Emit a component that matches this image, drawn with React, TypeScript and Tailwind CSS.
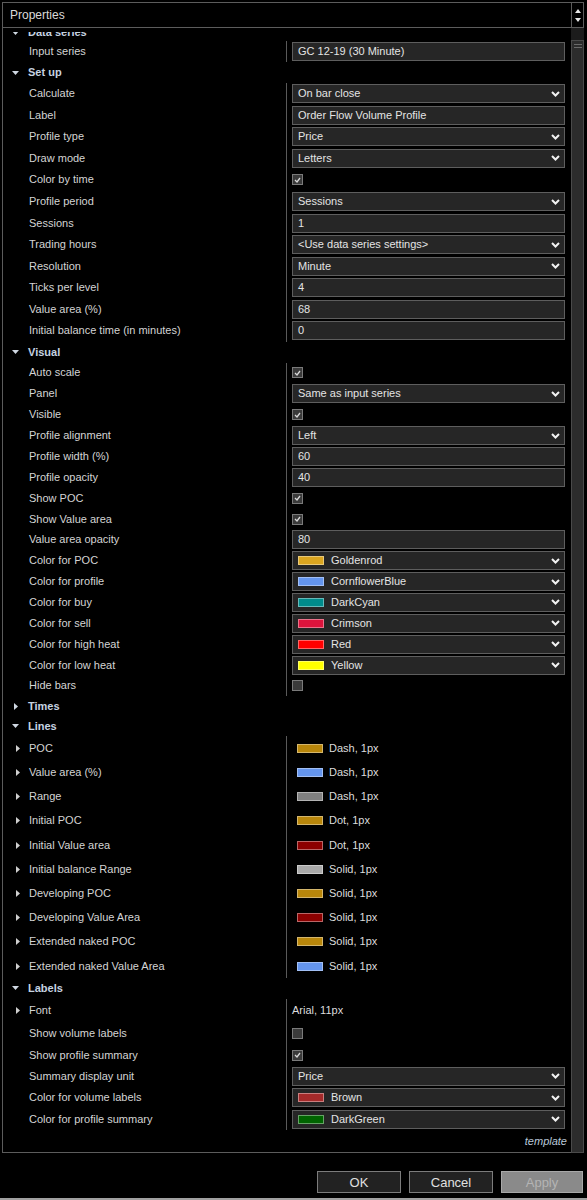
import React from 'react';

type Val =
  | { k: 'input'; v: string }
  | { k: 'dd'; v: string; sw?: string }
  | { k: 'cb'; on: boolean }
  | { k: 'line'; v: string; sw: string }
  | { k: 'text'; v: string };

type Item = { label: string; val: Val; sub?: boolean };

const Chevron = () => (
  <svg width="9" height="6" viewBox="0 0 9 6" className="shrink-0">
    <polyline points="1,1 4.5,4.5 8,1" fill="none" stroke="#f2f2f2" strokeWidth="2" />
  </svg>
);

const Swatch = ({ color }: { color: string }) => (
  <span
    className="inline-block w-[26px] h-[9px] border border-white/40 shrink-0"
    style={{ backgroundColor: color }}
  />
);

const Check = ({ on }: { on: boolean }) => (
  <span className="w-[11px] h-[11px] border border-[#7a7a7a] bg-[#3a3a3a] flex items-center justify-center">
    {on && (
      <svg width="7" height="6" viewBox="0 0 7 6">
        <polyline points="1,3 3,5 6,1" fill="none" stroke="#d8d8d8" strokeWidth="1.3" />
      </svg>
    )}
  </span>
);

const Value = ({ val }: { val: Val }) => {
  if (val.k === 'cb') return <Check on={val.on} />;
  if (val.k === 'text') return <span className="text-[#dcdcdc]">{val.v}</span>;
  if (val.k === 'line')
    return (
      <span className="flex items-center gap-[6px] pl-[5px] text-[#dcdcdc]">
        <Swatch color={val.sw} />
        {val.v}
      </span>
    );
  return (
    <div className="w-[273px] h-[19px] border border-[#5e5e5e] bg-[#262626] flex items-center pl-[5px] pr-[4px] text-[#e4e4e4]">
      {val.k === 'dd' && val.sw && (
        <span className="mr-[7px] flex">
          <Swatch color={val.sw} />
        </span>
      )}
      <span className="flex-1 whitespace-nowrap">{val.v}</span>
      {val.k === 'dd' && <Chevron />}
    </div>
  );
};

const Row = ({ item, h }: { item: Item; h: string }) => (
  <div className={`flex ${h}`}>
    <div className="w-[284px] shrink-0 flex items-center border-r border-[#5a5a5a] pl-[13px] text-[#d4d4d4]">
      <span className="w-[13px] flex items-center">
        {item.sub && (
          <svg width="4" height="7" viewBox="0 0 4 7">
            <polygon points="0,0 4,3.5 0,7" fill="#cfcfcf" />
          </svg>
        )}
      </span>
      {item.label}
    </div>
    <div className="flex-1 flex items-center pl-[5px]">
      <Value val={item.val} />
    </div>
  </div>
);

const Category = ({ label, open, h }: { label: string; open: boolean; h: string }) => (
  <div className={`flex items-center pl-[9px] ${h}`}>
    <span className="w-[16px] flex items-center">
      {open ? (
        <svg width="7" height="4" viewBox="0 0 7 4">
          <polygon points="0,0 7,0 3.5,4" fill="#cfd8e2" />
        </svg>
      ) : (
        <svg width="4" height="7" viewBox="0 0 4 7" className="ml-[2px]">
          <polygon points="0,0 4,3.5 0,7" fill="#cfd8e2" />
        </svg>
      )}
    </span>
    <span className="font-bold text-[#c6d3e1]">{label}</span>
  </div>
);

const setup: Item[] = [
  { label: 'Calculate', val: { k: 'dd', v: 'On bar close' } },
  { label: 'Label', val: { k: 'input', v: 'Order Flow Volume Profile' } },
  { label: 'Profile type', val: { k: 'dd', v: 'Price' } },
  { label: 'Draw mode', val: { k: 'dd', v: 'Letters' } },
  { label: 'Color by time', val: { k: 'cb', on: true } },
  { label: 'Profile period', val: { k: 'dd', v: 'Sessions' } },
  { label: 'Sessions', val: { k: 'input', v: '1' } },
  { label: 'Trading hours', val: { k: 'dd', v: '<Use data series settings>' } },
  { label: 'Resolution', val: { k: 'dd', v: 'Minute' } },
  { label: 'Ticks per level', val: { k: 'input', v: '4' } },
  { label: 'Value area (%)', val: { k: 'input', v: '68' } },
  { label: 'Initial balance time (in minutes)', val: { k: 'input', v: '0' } },
];

const visual: Item[] = [
  { label: 'Auto scale', val: { k: 'cb', on: true } },
  { label: 'Panel', val: { k: 'dd', v: 'Same as input series' } },
  { label: 'Visible', val: { k: 'cb', on: true } },
  { label: 'Profile alignment', val: { k: 'dd', v: 'Left' } },
  { label: 'Profile width (%)', val: { k: 'input', v: '60' } },
  { label: 'Profile opacity', val: { k: 'input', v: '40' } },
  { label: 'Show POC', val: { k: 'cb', on: true } },
  { label: 'Show Value area', val: { k: 'cb', on: true } },
  { label: 'Value area opacity', val: { k: 'input', v: '80' } },
  { label: 'Color for POC', val: { k: 'dd', v: 'Goldenrod', sw: '#daa520' } },
  { label: 'Color for profile', val: { k: 'dd', v: 'CornflowerBlue', sw: '#6495ed' } },
  { label: 'Color for buy', val: { k: 'dd', v: 'DarkCyan', sw: '#008b8b' } },
  { label: 'Color for sell', val: { k: 'dd', v: 'Crimson', sw: '#dc143c' } },
  { label: 'Color for high heat', val: { k: 'dd', v: 'Red', sw: '#ff0000' } },
  { label: 'Color for low heat', val: { k: 'dd', v: 'Yellow', sw: '#ffff00' } },
  { label: 'Hide bars', val: { k: 'cb', on: false } },
];

const lines: Item[] = [
  { label: 'POC', sub: true, val: { k: 'line', v: 'Dash, 1px', sw: '#b8860b' } },
  { label: 'Value area (%)', sub: true, val: { k: 'line', v: 'Dash, 1px', sw: '#6495ed' } },
  { label: 'Range', sub: true, val: { k: 'line', v: 'Dash, 1px', sw: '#808080' } },
  { label: 'Initial POC', sub: true, val: { k: 'line', v: 'Dot, 1px', sw: '#b8860b' } },
  { label: 'Initial Value area', sub: true, val: { k: 'line', v: 'Dot, 1px', sw: '#8b0000' } },
  { label: 'Initial balance Range', sub: true, val: { k: 'line', v: 'Solid, 1px', sw: '#a9a9a9' } },
  { label: 'Developing POC', sub: true, val: { k: 'line', v: 'Solid, 1px', sw: '#b8860b' } },
  { label: 'Developing Value Area', sub: true, val: { k: 'line', v: 'Solid, 1px', sw: '#8b0000' } },
  { label: 'Extended naked POC', sub: true, val: { k: 'line', v: 'Solid, 1px', sw: '#b8860b' } },
  { label: 'Extended naked Value Area', sub: true, val: { k: 'line', v: 'Solid, 1px', sw: '#6495ed' } },
];

const labels: Item[] = [
  { label: 'Show volume labels', val: { k: 'cb', on: false } },
  { label: 'Show profile summary', val: { k: 'cb', on: true } },
  { label: 'Summary display unit', val: { k: 'dd', v: 'Price' } },
  { label: 'Color for volume labels', val: { k: 'dd', v: 'Brown', sw: '#a52a2a' } },
  { label: 'Color for profile summary', val: { k: 'dd', v: 'DarkGreen', sw: '#006400' } },
];

export default function App() {
  return (
    <div className="w-[587px] h-[1200px] bg-black overflow-hidden flex flex-col text-[11px] leading-none font-['Liberation_Sans',Arial,sans-serif]">
      <div className="flex pl-[2px] pt-[2px] h-[1153px]">
        {/* property grid */}
        <div className="w-[569px] flex flex-col border-l border-t border-b border-[#5c5c5c]">
          <div className="h-[25px] shrink-0 flex items-center pl-[7px] border-b border-[#5c5c5c] text-[12px] text-[#dadada]">
            Properties
          </div>
          <div className="flex-1 overflow-hidden mt-[4px]">
            <div className="-mt-[8px]">
              <Category label="Data series" open h="h-[17px]" />
              <Row item={{ label: 'Input series', val: { k: 'input', v: 'GC 12-19 (30 Minute)' } }} h="h-[21px]" />
              <Category label="Set up" open h="h-[21px]" />
              {setup.map((it) => (
                <Row key={it.label} item={it} h="h-[21.55px]" />
              ))}
              <Category label="Visual" open h="h-[21px]" />
              {visual.map((it) => (
                <Row key={it.label} item={it} h="h-[20.87px]" />
              ))}
              <Category label="Times" open={false} h="h-[20px]" />
              <Category label="Lines" open h="h-[20px]" />
              {lines.map((it) => (
                <Row key={it.label} item={it} h="h-[24.2px]" />
              ))}
              <Category label="Labels" open h="h-[20.5px]" />
              <Row item={{ label: 'Font', sub: true, val: { k: 'text', v: 'Arial, 11px' } }} h="h-[24.5px]" />
              {labels.map((it) => (
                <Row key={it.label} item={it} h="h-[21.3px]" />
              ))}
              <div className="h-[24px] flex items-center justify-end pr-[4px] italic text-[#b9c8d8]">template</div>
            </div>
          </div>
        </div>
        {/* scrollbar */}
        <div className="w-[13px] flex flex-col border-t border-[#5c5c5c]">
          <div className="h-[25px] shrink-0 flex flex-col items-center justify-center gap-[5px] border-l border-r border-b border-[#5c5c5c]">
            <svg width="6" height="4" viewBox="0 0 6 4">
              <polygon points="0,4 6,4 3,0" fill="#e6e6e6" />
            </svg>
            <svg width="6" height="4" viewBox="0 0 6 4">
              <polygon points="0,0 6,0 3,4" fill="#e6e6e6" />
            </svg>
          </div>
          <div className="flex-1 flex flex-col bg-[#1c1c1c] pt-[12px]">
            <div className="flex-1 bg-[#2c2c2c] border border-[#4a4a4a] flex flex-col items-center pt-[3px] gap-[2px]">
              <span className="w-[8px] h-px bg-[#6a6a6a]" />
              <span className="w-[8px] h-px bg-[#6a6a6a]" />
            </div>
          </div>
        </div>
      </div>
      {/* buttons */}
      <div className="flex justify-end gap-[8px] pr-[4px] mt-[18px]">
        <button className="w-[84px] h-[22px] border border-[#7c7c7c] bg-[#222222] text-[13px] text-[#e0e0e0]">OK</button>
        <button className="w-[84px] h-[22px] border border-[#7c7c7c] bg-[#222222] text-[13px] text-[#e0e0e0]">Cancel</button>
        <button className="w-[82px] h-[22px] border border-[#a8a8a8] bg-[#8a8a8a] text-[13px] text-[#b4b4b4]">Apply</button>
      </div>
      <div className="mt-auto h-[2px] bg-[#a0a0a0]" />
    </div>
  );
}
